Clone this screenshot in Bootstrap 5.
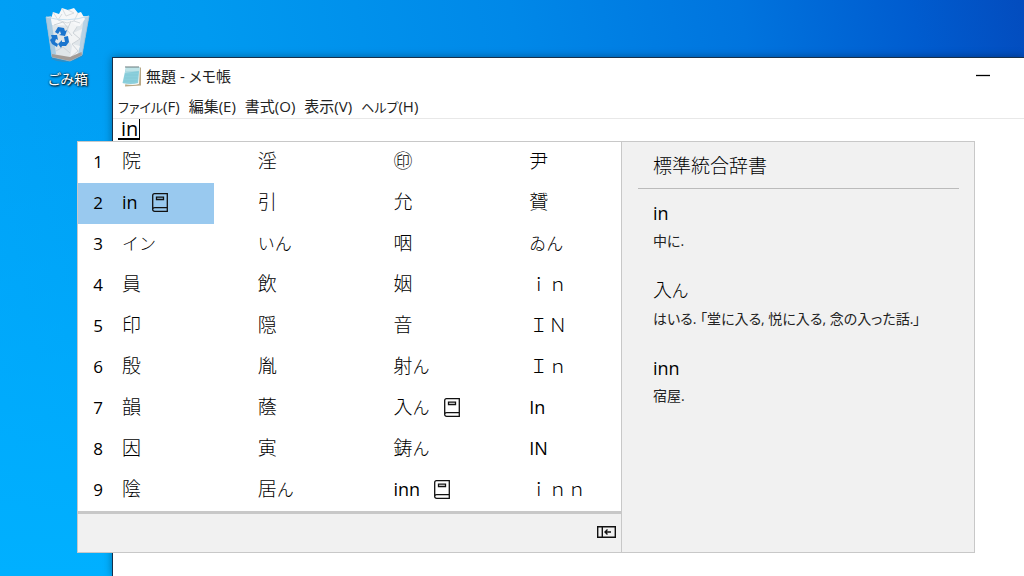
<!DOCTYPE html>
<html lang="ja">
<head>
<meta charset="utf-8">
<meta name="viewport" content="width=device-width, initial-scale=1">
<title>無題 - メモ帳</title>
<link href="https://cdn.jsdelivr.net/npm/bootstrap@5.3.0/dist/css/bootstrap.min.css" rel="stylesheet">
<style>
  :root { --ui-line: #c8c8c8; --ui-panel: #f1f1f1; --ui-select: #99c9ef; }
  body {
    font-family: "Open Sans", "Noto Sans CJK JP", sans-serif;
    font-feature-settings: "palt";
    font-weight: 400;
    color: #000;
  }
  .desktop {
    background:
      linear-gradient(180deg, rgba(0, 176, 255, 0) 0, rgba(0, 176, 255, 0) 60px, #00b0ff 100%),
      linear-gradient(78deg, #00a2f8 0, #009af0 28%, #0088e8 55%, #0074de 75%, #005ccf 90%, #034cbe 100%);
  }
  .desk-icons { flex: 0 0 112px; padding: 6px 0 0 24px; }
  .desk-icon { width: 88px; color: #fff; font-size: 14px; line-height: 20px; text-shadow: 1px 1px 2px #000, 0 0 2px #000; }
  .desk-icon:hover { color: #fff; }
  .desk-icon svg { width: 50px; height: 58px; margin-bottom: 5px; }
  .notepad { margin-top: 57px; border-left: 1px solid #17304a; border-top: 1px solid #17304a; min-width: 0; box-shadow: 0 0 8px rgba(0, 0, 0, .35); }
  .title-bar { height: 36px; padding-left: 9px; font-size: 15px; color: #222; }
  .title-bar svg { width: 20px; height: 22px; }
  .title-bar .btn-min { width: 46px; margin-right: 18px; height: 36px; }
  .title-bar .btn-min svg { width: 14px; height: 14px; }
  .menu-bar { height: 25px; padding-left: 5px; gap: 9px; font-size: 15px; border-bottom: 1px solid #e8e8e8; }
  .menu-bar a { color: #222; }
  .menu-bar .kana { font-size: 13px; }
  .edit-box { border: 0; resize: none; outline: 0; }
  .preedit { left: 5px; top: 0; width: 22px; height: 21px; padding-left: 3px; font-size: 20px; line-height: 20px; border-right: 1px solid #000; border-bottom: 2px solid #000; }
  .ime { left: 77px; top: 141px; width: calc(100% - 126px); border: 1px solid var(--ui-line); font-size: 19px; font-weight: 300; background: var(--ui-panel); }
  .ime-list { flex: 0 0 543px; }
  .cand-grid { grid-template-columns: repeat(4, 1fr); grid-template-rows: repeat(9, 41px); grid-auto-flow: column; border-bottom: 3px solid var(--ui-line); }
  .cand { padding: 0 0 2px; border: 0; background: none; line-height: 39px; font-weight: inherit; color: #000; }
  .cand.chosen { background: var(--ui-select); }
  .cand-no { flex: 0 0 44px; padding-right: 4px; font-size: 17px; font-weight: 400; }
  .ime .latin { font-size: 18px; font-weight: 400; }
  .ime .kana { font-size: 17px; }
  .cand svg { width: 16px; height: 19px; margin-left: 14px; }
  .ime-foot { height: 38px; padding: 0 5px 2px 0; }
  .ime-foot svg { width: 19px; height: 12px; }
  .ime-dict { border-left: 1px solid var(--ui-line); padding: 10px 15px 0 16px; }
  .dict-head { font-size: 19px; line-height: 28px; font-weight: inherit; padding: 0 15px 8px; border-bottom: 1px solid #bbb; margin-bottom: 10px; }
  .dict-list { padding: 0 15px; }
  .dict-list dt { font-weight: inherit; line-height: 28px; }
  .dict-list dd { font-size: 14px; line-height: 28px; font-weight: 400; color: #222; margin-bottom: 21px; }
</style>
</head>
<body>
<svg class="d-none" aria-hidden="true">
  <symbol id="book" viewBox="0 0 16 19">
    <path d="M2.5.7H15.3V18.3H2.7Q.7 18.3.7 16.5V2.5Q.7.7 2.5.7ZM.7 16.2Q1 14.6 2.7 14.6H15.3M4.5 4.2h7v2.3h-7z" fill="none" stroke="#111" stroke-width="1.3"/>
  </symbol>
</svg>

<div class="desktop d-flex vh-100 position-relative overflow-hidden">
  <div class="desk-icons">
    <a href="#" class="desk-icon d-flex flex-column align-items-center text-decoration-none">
      <svg viewBox="0 0 50 58" aria-hidden="true">
        <path d="M8 53 Q24 60 40 50 L36 45 L12 46Z" fill="#5b8099" opacity=".5"/>
        <path d="M3 11 L46 10 L39 49 L27 55 L9 51Z" fill="#dfe5e9"/>
        <path d="M3 11 L8 10 L13 48 L9 51Z" fill="#a9cbe2"/>
        <path d="M46 10 L41 11 L35 50 L39 49Z" fill="#b7d2e5"/>
        <path d="M8 13 L10 6 L16 8 L19 2 L25 4 L31 2 L35 7 L38 6 L42 13 L37 20 L9 19Z" fill="#f7f8f9"/>
        <path d="M10 6L15 14L19 8M19 2L23 10L31 7L25 4M35 7L31 15L37 17M15 14L24 17L31 15" fill="none" stroke="#d6dbdf"/>
        <path d="M27 14L34 21L30 27L39 23L36 34L29 38L37 40L34 48L27 52L29 40L24 31Z" fill="#f2f4f5"/>
        <path d="M34 21L30 27L37 33L29 38L35 45L27 52M28 15L24 24L29 30M11 19L20 16L25 22M13 45L20 41L27 47" fill="none" stroke="#cdd3d8"/>
        <path d="M3 11Q24 17 46 10" fill="none" stroke="#c5dfef"/>
        <path d="M3 11L9 51L27 55L39 49L46 10" fill="none" stroke="#9fbed3" stroke-width=".8"/>
        <path d="M9 51L27 55L39 49L38.500 46L27 51L9 48Z" fill="#a39c98"/>
        <g fill="#1b75ce">
          <path d="M12 26L15 21L21 22L22 25L24 24L22 30L16 29L18 28L17 25L15 28Z"/>
          <path d="M8 29L14 29L15 34L13 33L12 36L15 38L14 41L9 38L7 34L9 32Z"/>
          <path d="M21 31L25 30L26 36L23 40L19 40L18 42L15 38L19 34V36L22 36Z"/>
        </g>
      </svg>
      <span>ごみ箱</span>
    </a>
  </div>

  <main class="notepad bg-white flex-grow-1 d-flex flex-column">
    <header class="title-bar d-flex align-items-center">
      <svg viewBox="0 0 20 22" class="me-1" aria-hidden="true">
        <path d="M5 3L19 2.500V20.500L3 21.500Z" fill="#b9a987"/>
        <path d="M4 2L18 2L17 19Q12 21 1 19Z" fill="#f4f8f6"/>
        <path d="M4 2L17.500 2L16 18Q9 20 .5 18Z" fill="#8bcfdc"/>
        <path d="M4 2L17.500 2L17 6L3 8Z" fill="#bfe4e8"/>
        <path d="M3.500 7H16M3 10H16M2.500 13H15.500M2 16H15" stroke="#7cc2d2" stroke-width=".5"/>
        <path d="M4 1V3M6 1V3M8 1V3M10 1V3M12 1V3M14 1V3M16 1V3" stroke="#697b7d"/>
      </svg>
      <span>無題 - メモ帳</span>
      <button type="button" class="btn-min btn p-0 border-0 ms-auto d-flex align-items-center justify-content-center" aria-label="最小化">
        <svg viewBox="0 0 14 14"><path d="M0 6.500H14" stroke="#000" stroke-width="1.300"/></svg>
      </button>
    </header>
    <nav class="menu-bar d-flex align-items-center">
      <a href="#" class="text-decoration-none"><span class="kana">ファイル</span>(F)</a>
      <a href="#" class="text-decoration-none">編集(E)</a>
      <a href="#" class="text-decoration-none">書式(O)</a>
      <a href="#" class="text-decoration-none">表示(V)</a>
      <a href="#" class="text-decoration-none"><span class="kana">ヘルプ</span>(H)</a>
    </nav>
    <div class="flex-grow-1 position-relative d-flex">
      <textarea class="edit-box w-100" aria-label="本文"></textarea>
      <span class="preedit position-absolute">in</span>
    </div>
  </main>

  <section class="ime position-absolute d-flex">
    <div class="ime-list d-flex flex-column">
      <div class="cand-grid d-grid bg-white">
        <button type="button" class="cand d-flex align-items-center"><span class="cand-no text-center">1</span>院</button>
        <button type="button" class="cand chosen d-flex align-items-center"><span class="cand-no text-center">2</span><span class="latin">in</span><svg><use href="#book"/></svg></button>
        <button type="button" class="cand d-flex align-items-center"><span class="cand-no text-center">3</span><span class="kana">イン</span></button>
        <button type="button" class="cand d-flex align-items-center"><span class="cand-no text-center">4</span>員</button>
        <button type="button" class="cand d-flex align-items-center"><span class="cand-no text-center">5</span>印</button>
        <button type="button" class="cand d-flex align-items-center"><span class="cand-no text-center">6</span>殷</button>
        <button type="button" class="cand d-flex align-items-center"><span class="cand-no text-center">7</span>韻</button>
        <button type="button" class="cand d-flex align-items-center"><span class="cand-no text-center">8</span>因</button>
        <button type="button" class="cand d-flex align-items-center"><span class="cand-no text-center">9</span>陰</button>

        <button type="button" class="cand d-flex align-items-center"><span class="cand-no"></span>淫</button>
        <button type="button" class="cand d-flex align-items-center"><span class="cand-no"></span>引</button>
        <button type="button" class="cand d-flex align-items-center"><span class="cand-no"></span><span class="kana">いん</span></button>
        <button type="button" class="cand d-flex align-items-center"><span class="cand-no"></span>飲</button>
        <button type="button" class="cand d-flex align-items-center"><span class="cand-no"></span>隠</button>
        <button type="button" class="cand d-flex align-items-center"><span class="cand-no"></span>胤</button>
        <button type="button" class="cand d-flex align-items-center"><span class="cand-no"></span>蔭</button>
        <button type="button" class="cand d-flex align-items-center"><span class="cand-no"></span>寅</button>
        <button type="button" class="cand d-flex align-items-center"><span class="cand-no"></span>居<span class="kana">ん</span></button>

        <button type="button" class="cand d-flex align-items-center"><span class="cand-no"></span>㊞</button>
        <button type="button" class="cand d-flex align-items-center"><span class="cand-no"></span>允</button>
        <button type="button" class="cand d-flex align-items-center"><span class="cand-no"></span>咽</button>
        <button type="button" class="cand d-flex align-items-center"><span class="cand-no"></span>姻</button>
        <button type="button" class="cand d-flex align-items-center"><span class="cand-no"></span>音</button>
        <button type="button" class="cand d-flex align-items-center"><span class="cand-no"></span>射<span class="kana">ん</span></button>
        <button type="button" class="cand d-flex align-items-center"><span class="cand-no"></span>入<span class="kana">ん</span><svg><use href="#book"/></svg></button>
        <button type="button" class="cand d-flex align-items-center"><span class="cand-no"></span>鋳<span class="kana">ん</span></button>
        <button type="button" class="cand d-flex align-items-center"><span class="cand-no"></span><span class="latin">inn</span><svg><use href="#book"/></svg></button>

        <button type="button" class="cand d-flex align-items-center"><span class="cand-no"></span>尹</button>
        <button type="button" class="cand d-flex align-items-center"><span class="cand-no"></span>贇</button>
        <button type="button" class="cand d-flex align-items-center"><span class="cand-no"></span><span class="kana">ゐん</span></button>
        <button type="button" class="cand d-flex align-items-center"><span class="cand-no"></span>ｉｎ</button>
        <button type="button" class="cand d-flex align-items-center"><span class="cand-no"></span>ＩＮ</button>
        <button type="button" class="cand d-flex align-items-center"><span class="cand-no"></span>Ｉｎ</button>
        <button type="button" class="cand d-flex align-items-center"><span class="cand-no"></span><span class="latin">In</span></button>
        <button type="button" class="cand d-flex align-items-center"><span class="cand-no"></span><span class="latin">IN</span></button>
        <button type="button" class="cand d-flex align-items-center"><span class="cand-no"></span>ｉｎｎ</button>
      </div>
      <div class="ime-foot d-flex align-items-center justify-content-end">
        <button type="button" class="btn p-0 border-0 d-flex" aria-label="一覧を閉じる">
          <svg viewBox="0 0 19 12"><path d="M.7.7H18.3V11.3H.7ZM5.300.7V11.3M8 6H14M10.500 3.500L8 6L10.500 8.500" fill="none" stroke="#111" stroke-width="1.400"/></svg>
        </button>
      </div>
    </div>
    <aside class="ime-dict flex-grow-1">
      <h2 class="dict-head">標準統合辞書</h2>
      <dl class="dict-list mb-0">
        <dt class="latin">in</dt>
        <dd>中に.</dd>
        <dt>入<span class="kana">ん</span></dt>
        <dd>はいる. 「堂に入る, 悦に入る, 念の入った話.」</dd>
        <dt class="latin">inn</dt>
        <dd>宿屋.</dd>
      </dl>
    </aside>
  </section>
</div>
<script src="https://cdn.jsdelivr.net/npm/bootstrap@5.3.0/dist/js/bootstrap.bundle.min.js"></script>
</body>
</html>
